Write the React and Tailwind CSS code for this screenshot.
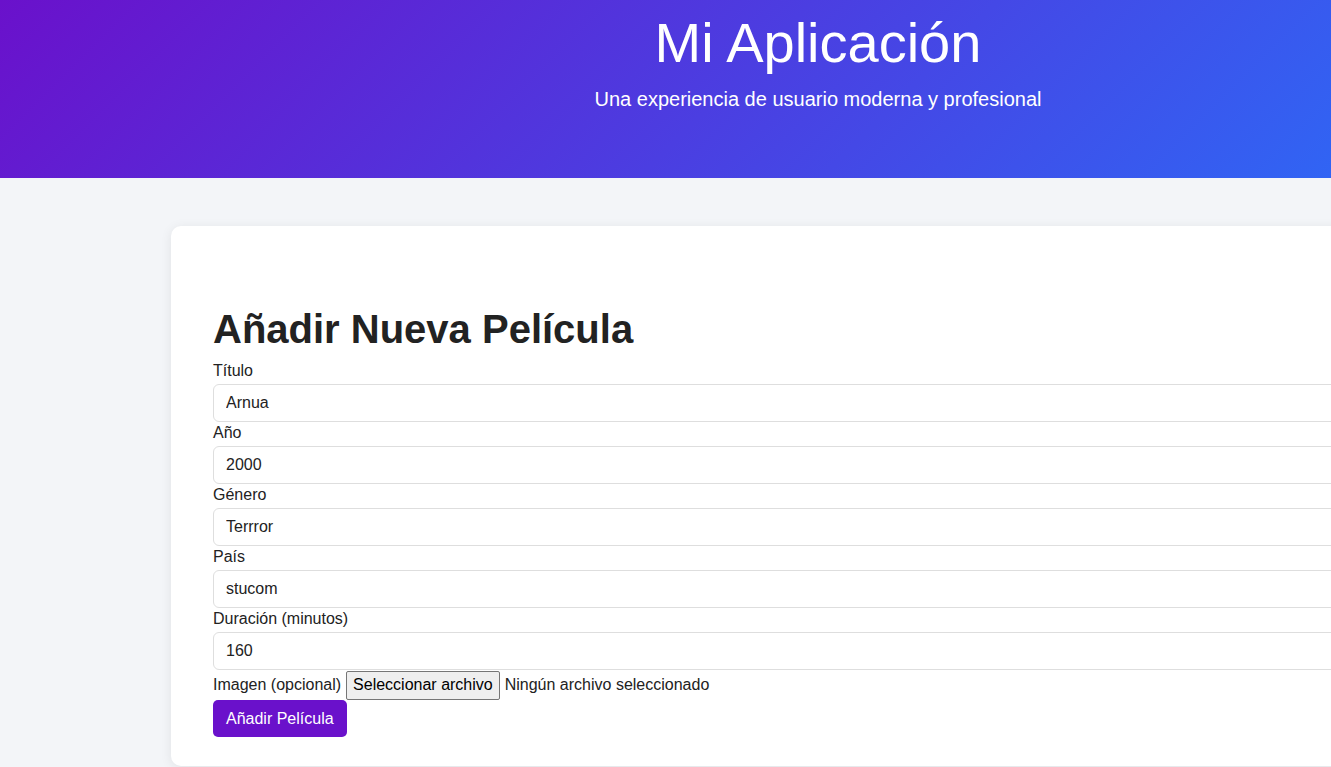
import React from "react";

const fields = [
  { label: "Título", value: "Arnua" },
  { label: "Año", value: "2000" },
  { label: "Género", value: "Terrror" },
  { label: "País", value: "stucom" },
  { label: "Duración (minutos)", value: "160" },
];

export default function App() {
  return (
    <div className="w-full min-h-screen overflow-hidden bg-[#f3f5f8] font-['Liberation_Sans',Arial,sans-serif] text-[#222]">
      <div className="w-[1636px]">
        {/* ─── Header ─────────────────────────── */}
        <header className="h-[178px] bg-[linear-gradient(135deg,#6a11cb,#2575fc)] text-white text-center pt-[11px]">
          <h1 className="text-[56px] leading-[64px] font-normal">Mi Aplicación</h1>
          <p className="mt-[13px] text-[20px] leading-[23px]">
            Una experiencia de usuario moderna y profesional
          </p>
        </header>

        {/* ─── Form card ──────────────────────── */}
        <main className="pt-12 px-[171px]">
          <div className="bg-white rounded-[10px] shadow-[0_2px_12px_rgba(0,0,0,0.08)] px-[42px] pt-[80px] pb-[29px]">
            <h2 className="text-[40px] leading-[46px] font-bold text-[#222] mb-[10px]">
              Añadir Nueva Película
            </h2>

            <form className="flex flex-col" onSubmit={(e) => e.preventDefault()}>
              {fields.map((f) => (
                <div key={f.label} className="flex flex-col mb-[2px]">
                  <label className="text-[16px] leading-[18px]">{f.label}</label>
                  <input
                    defaultValue={f.value}
                    className="mt-[4px] h-[38px] w-full border border-[#dedede] rounded-[6px] px-[12px] text-[16px] text-[#222] bg-white outline-none"
                  />
                </div>
              ))}

              {/* File picker */}
              <div className="flex items-center h-[30px] -mt-[2px] text-[16px]">
                <span>Imagen (opcional)</span>
                <span className="ml-[5px] h-[29px] px-[6px] flex items-center bg-[#efefef] border border-[#767676] rounded-[2px] text-black">
                  Seleccionar archivo
                </span>
                <span className="ml-[5px]">Ningún archivo seleccionado</span>
              </div>

              <div>
                <button
                  type="submit"
                  className="h-[37px] px-[13px] rounded-[5px] bg-[#6a11cb] text-white text-[16px]"
                >
                  Añadir Película
                </button>
              </div>
            </form>
          </div>
        </main>
      </div>
    </div>
  );
}
